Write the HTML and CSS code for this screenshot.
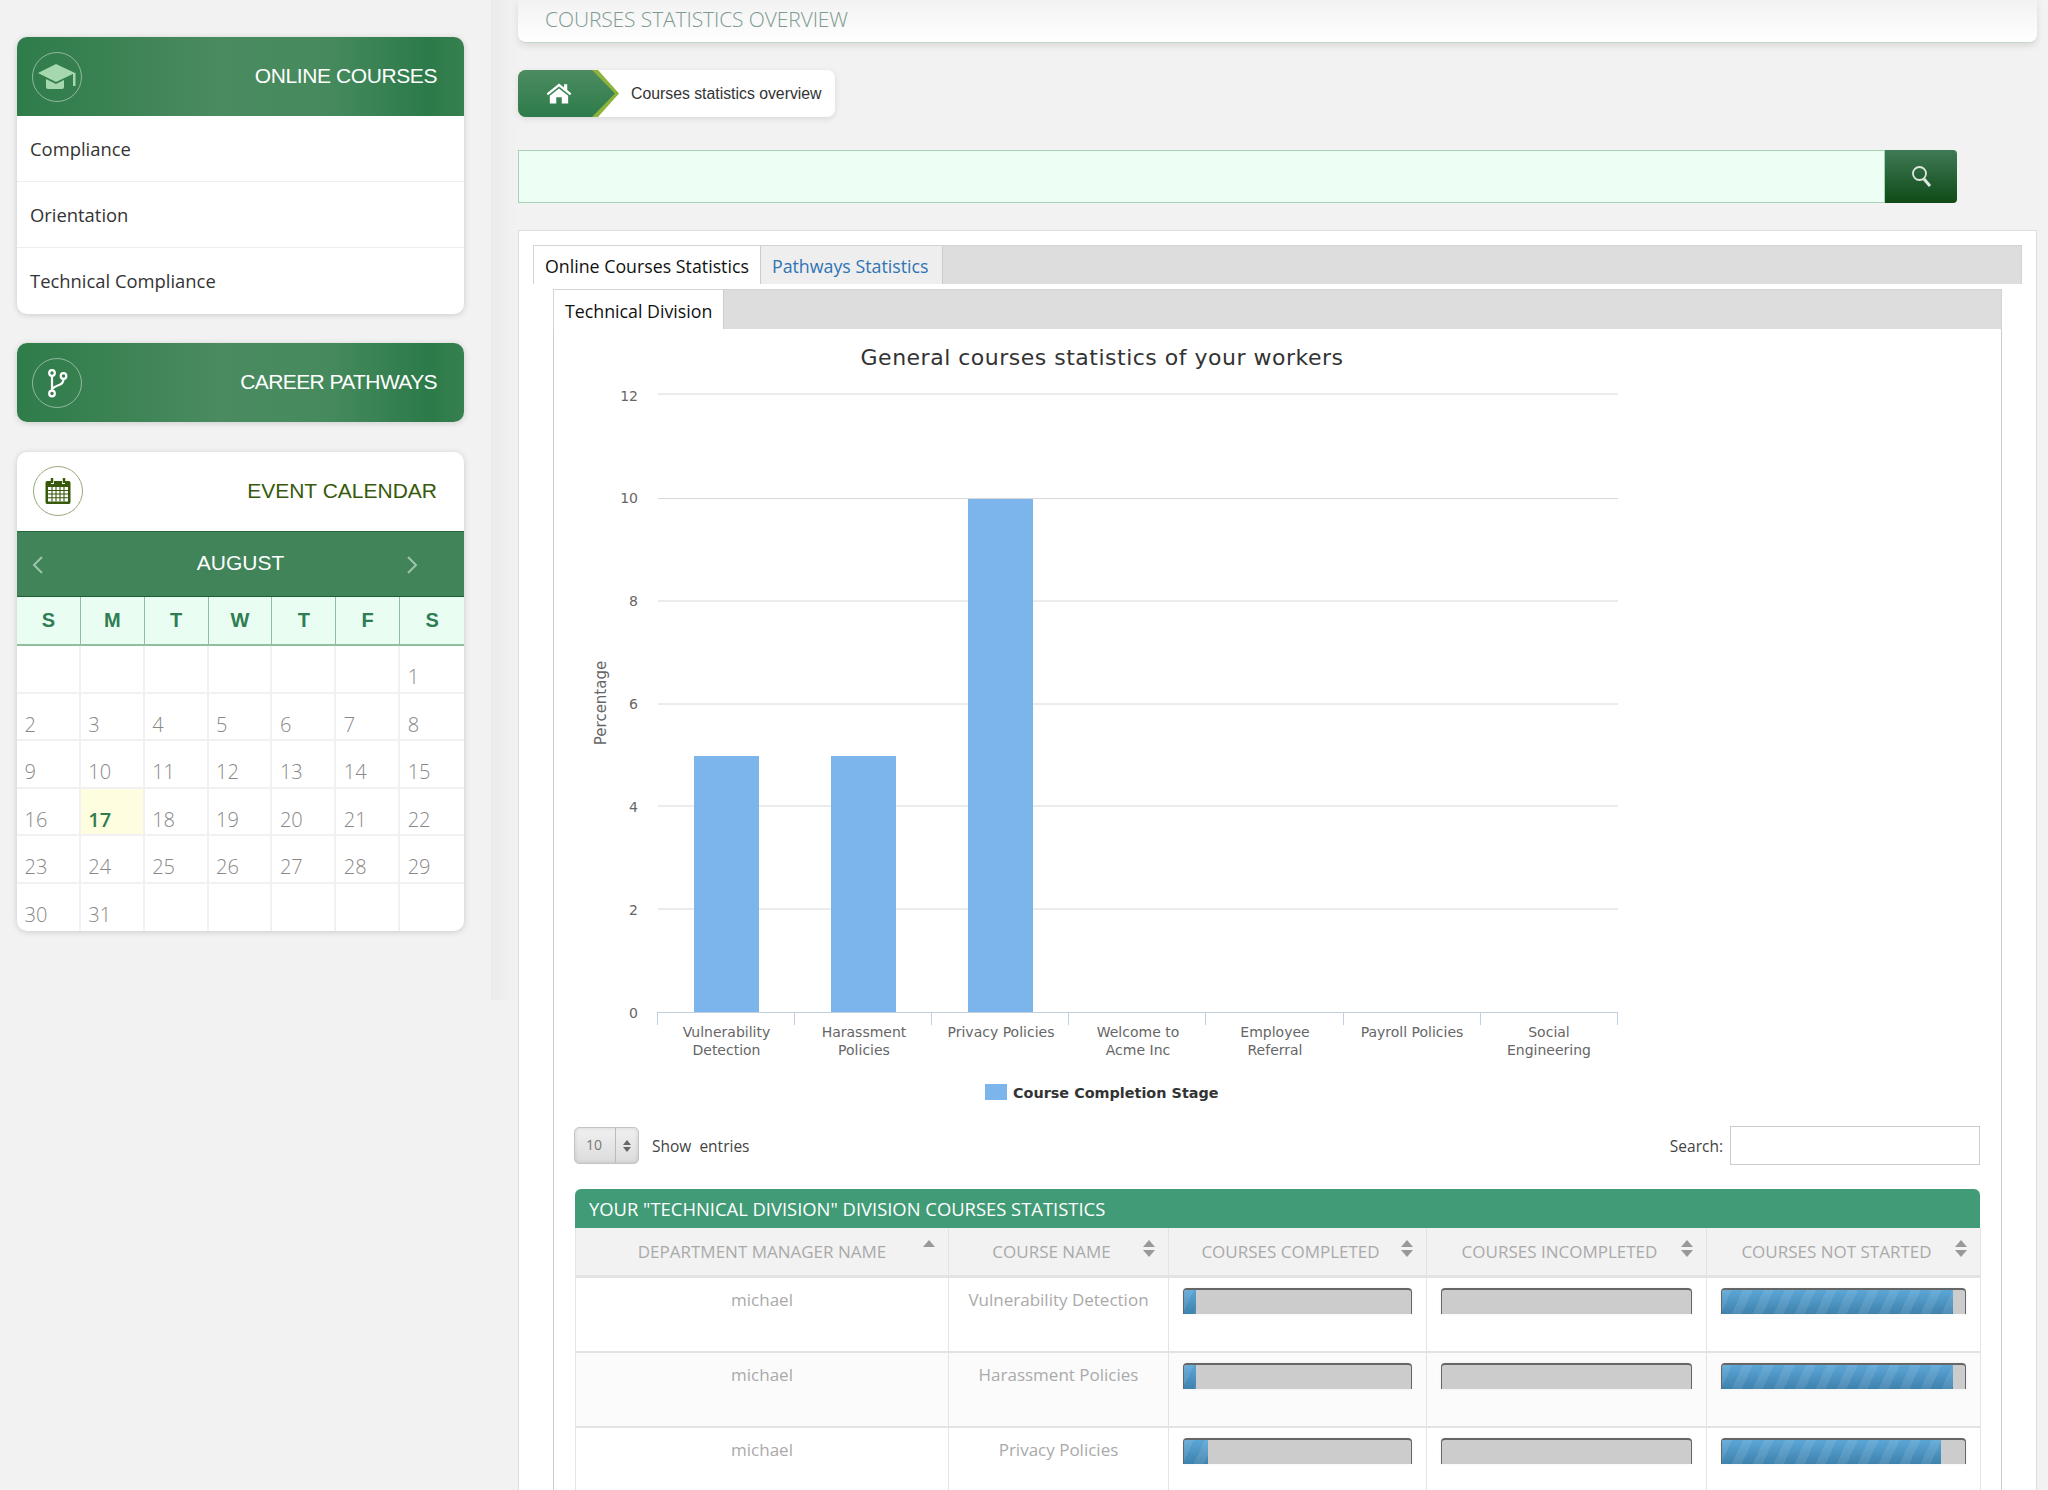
FILE: index.html
```html
<!DOCTYPE html>
<html lang="en">
<head>
    <meta charset="UTF-8">
    <title>Courses statistics overview</title>
    <link rel="stylesheet" href="styles.css">
</head>
<body>
<div class="page">
    <aside class="sidebar">
        <div class="side-card">
            <div class="side-head">
                <span class="head-icon">
                    <svg width="40" height="30" viewBox="0 0 40 30"><path d="M19 2 L38 11 L19 20 L1 11Z M9 17 L19 22 L27 18 V25 Q27 27 25 27 H11 Q9 27 9 25Z M36 11 H38.500 V24 H36Z" fill="#a6d8ae"/></svg>
                </span>
                <span class="head-title">ONLINE COURSES</span>
            </div>
            <ul class="side-list">
                <li>Compliance</li>
                <li>Orientation</li>
                <li>Technical Compliance</li>
            </ul>
        </div>

        <div class="side-card career">
            <div class="side-head">
                <span class="head-icon">
                    <svg width="24" height="30" viewBox="0 0 24 30" fill="none" stroke="#fff" stroke-width="2.200"><circle cx="7" cy="5" r="2.800"/><circle cx="7" cy="25.500" r="2.800"/><circle cx="18.500" cy="8" r="2.800"/><path d="M7 8 V22.500 M18.500 11 Q18.500 15.500 14 17 Q8 19 7 22"/></svg>
                </span>
                <span class="head-title">CAREER PATHWAYS</span>
            </div>
        </div>

        <div class="side-card">
            <div class="cal-head">
                <span class="head-icon cal-icon">
                    <svg width="26" height="28" viewBox="0 0 26 28"><path d="M2 4 H6 V7 H9 V4 H17 V7 H20 V4 H24 Q25.500 4 25.500 6 V25 Q25.500 27 24 27 H2 Q.5 27 .5 25 V6 Q.5 4 2 4Z" fill="#37590b"/><path d="M7 1 V6 M19 1 V6" stroke="#37590b" stroke-width="2.500" fill="none"/><path d="M3 10 H23 V24.500 H3Z" fill="#fff"/><path d="M3 13.500 H23 M3 17 H23 M3 20.800 H23 M7 10 V24.500 M11 10 V24.500 M15 10 V24.500 M19 10 V24.500" stroke="#37590b" stroke-width="1.100" fill="none"/></svg>
                </span>
                <span class="cal-title">EVENT CALENDAR</span>
            </div>
            <div class="cal-month">
                <svg class="prev" width="12" height="18" viewBox="0 0 12 18" fill="none" stroke="#9cc5ab" stroke-width="2"><path d="M10 1 L2 9 L10 17"/></svg>
                <span>AUGUST</span>
                <svg class="next" width="12" height="18" viewBox="0 0 12 18" fill="none" stroke="#9cc5ab" stroke-width="2"><path d="M2 1 L10 9 L2 17"/></svg>
            </div>
            <div class="cal-week">
                <span>S</span><span>M</span><span>T</span><span>W</span><span>T</span><span>F</span><span>S</span>
            </div>
            <div class="cal-days">
                <span></span><span></span><span></span><span></span><span></span><span></span><span>1</span>
                <span>2</span><span>3</span><span>4</span><span>5</span><span>6</span><span>7</span><span>8</span>
                <span>9</span><span>10</span><span>11</span><span>12</span><span>13</span><span>14</span><span>15</span>
                <span>16</span><span class="today">17</span><span>18</span><span>19</span><span>20</span><span>21</span><span>22</span>
                <span>23</span><span>24</span><span>25</span><span>26</span><span>27</span><span>28</span><span>29</span>
                <span>30</span><span>31</span><span></span><span></span><span></span><span></span><span></span>
            </div>
        </div>
    </aside>

    <main class="content">
        <div class="top-bar">COURSES STATISTICS OVERVIEW</div>

        <div class="crumbs">
            <span class="crumb-home">
                <svg width="28" height="22" viewBox="0 0 28 24"><path d="M14 1.500 L0.500 12.500 L2 14.500 L14 4.800 L26 14.500 L27.500 12.500 L23 8.800 V2.500 H19.500 V6 Z" fill="#fff"/><path d="M14 7 L4 15 V23.500 H11 V16.500 H17 V23.500 H24 V15 Z" fill="#fff"/></svg>
            </span>
            <span class="crumb-text">Courses statistics overview</span>
        </div>

        <div class="search-row">
            <div class="search-box"></div>
            <div class="search-btn">
                <svg width="21" height="23" viewBox="0 0 21 23" fill="none" stroke="#dfe8df"><circle cx="8.500" cy="8.500" r="6.500" stroke-width="1.800"/><path d="M13 14 L19 21" stroke-width="3"/></svg>
            </div>
        </div>

        <section class="panel">
            <div class="tabs">
                <span class="tab active">Online Courses Statistics</span>
                <span class="tab link">Pathways Statistics</span>
            </div>
            <div class="inner">
                <div class="tabs inner-tabs">
                    <span class="tab active">Technical Division</span>
                </div>

                <svg class="chart" width="1447" height="785" viewBox="554 329 1447 785">
                    <text class="chart-title" x="1102" y="365" text-anchor="middle">General courses statistics of your workers</text>
                    <g class="grid">
                        <path d="M658 394 H1618"/>
                        <path d="M658 498.500 H1618"/>
                        <path d="M658 601 H1618"/>
                        <path d="M658 704 H1618"/>
                        <path d="M658 806 H1618"/>
                        <path d="M658 909 H1618"/>
                    </g>
                    <g class="y-labels">
                        <text x="638" y="401">12</text>
                        <text x="638" y="503">10</text>
                        <text x="638" y="606">8</text>
                        <text x="638" y="709">6</text>
                        <text x="638" y="812">4</text>
                        <text x="638" y="915">2</text>
                        <text x="638" y="1018">0</text>
                    </g>
                    <text class="y-title" transform="translate(606 703) rotate(-90)" text-anchor="middle">Percentage</text>
                    <g class="bars">
                        <rect x="694" y="756" width="65" height="256"/>
                        <rect x="831" y="756" width="65" height="256"/>
                        <rect x="968" y="499" width="65" height="513"/>
                    </g>
                    <path class="axis" d="M657 1012.500 H1618 M657.500 1012 V1025 M794.500 1012 V1025 M931.500 1012 V1025 M1068.500 1012 V1025 M1205.500 1012 V1025 M1343.500 1012 V1025 M1480.500 1012 V1025 M1617.500 1012 V1025"/>
                    <g class="x-labels" text-anchor="middle">
                        <text x="726.500" y="1037">Vulnerability</text>
                        <text x="726.500" y="1055">Detection</text>
                        <text x="864" y="1037">Harassment</text>
                        <text x="864" y="1055">Policies</text>
                        <text x="1001" y="1037">Privacy Policies</text>
                        <text x="1138" y="1037">Welcome to</text>
                        <text x="1138" y="1055">Acme Inc</text>
                        <text x="1275" y="1037">Employee</text>
                        <text x="1275" y="1055">Referral</text>
                        <text x="1412" y="1037">Payroll Policies</text>
                        <text x="1549" y="1037">Social</text>
                        <text x="1549" y="1055">Engineering</text>
                    </g>
                    <rect x="985" y="1084" width="22" height="16" fill="#7cb5ec"/>
                    <text class="legend" x="1013" y="1098">Course Completion Stage</text>
                </svg>

                <div class="table-tools">
                    <div class="length">
                        <span class="select"><span class="select-value">10</span><span class="select-arrows"></span></span>
                        <span>Show&nbsp; entries</span>
                    </div>
                    <div class="filter">
                        <span>Search:</span>
                        <span class="filter-input"></span>
                    </div>
                </div>

                <div class="table-caption">YOUR "TECHNICAL DIVISION" DIVISION COURSES STATISTICS</div>
                <table class="stats">
                    <thead>
                        <tr>
                            <th class="c-name sort-up">DEPARTMENT MANAGER NAME</th>
                            <th class="c-course">COURSE NAME</th>
                            <th class="c-done">COURSES COMPLETED</th>
                            <th class="c-inc">COURSES INCOMPLETED</th>
                            <th class="c-not">COURSES NOT STARTED</th>
                        </tr>
                    </thead>
                    <tbody>
                        <tr>
                            <td>michael</td>
                            <td>Vulnerability Detection</td>
                            <td><div class="bar"><div class="fill" style="width: 12px"></div></div></td>
                            <td><div class="bar"></div></td>
                            <td><div class="bar"><div class="fill" style="width: 231px"></div></div></td>
                        </tr>
                        <tr class="alt">
                            <td>michael</td>
                            <td>Harassment Policies</td>
                            <td><div class="bar"><div class="fill" style="width: 12px"></div></div></td>
                            <td><div class="bar"></div></td>
                            <td><div class="bar"><div class="fill" style="width: 231px"></div></div></td>
                        </tr>
                        <tr>
                            <td>michael</td>
                            <td>Privacy Policies</td>
                            <td><div class="bar"><div class="fill" style="width: 24px"></div></div></td>
                            <td><div class="bar"></div></td>
                            <td><div class="bar"><div class="fill" style="width: 219px"></div></div></td>
                        </tr>
                    </tbody>
                </table>
            </div>
        </section>
    </main>
</div>
</body>
</html>
```

FILE: styles.css
```css
html, body {
    margin: 0;
    height: 1490px;
    overflow: hidden;
}
body {
    background-color: #f2f2f2;
    font-family: "Open Sans", "Liberation Sans", sans-serif;
    color: #333;
}
.page {
    display: flex;
    align-items: flex-start;
}

/* sidebar */
.sidebar {
    box-sizing: border-box;
    width: 518px;
    height: 1000px;
    flex: none;
    padding: 37px 54px 0 17px;
    background: linear-gradient(to right, #f2f2f2 491px, #ebebeb 491px, #f2f2f2 518px);
}
.side-card {
    background-color: #fff;
    border-radius: 10px;
    box-shadow: 0 1px 6px rgba(0, 0, 0, 0.16);
    margin-bottom: 29px;
    overflow: hidden;
}
.side-card.career {
    margin-bottom: 30px;
}
.side-head {
    height: 79px;
    display: flex;
    align-items: center;
    justify-content: space-between;
    padding: 0 27px 0 15px;
    background: linear-gradient(to right, #2f7c4b 0%, #37804f 15%, #4a8b60 45%, #458a5d 70%, #2c7a49 92%, #37804f 100%);
}
.head-icon {
    box-sizing: border-box;
    width: 50px;
    height: 50px;
    border: 1px solid rgba(255, 255, 255, 0.45);
    border-radius: 50%;
    display: flex;
    align-items: center;
    justify-content: center;
}
.head-title, .cal-title {
    margin-top: -2px;
    font-family: "Liberation Sans", sans-serif;
    font-size: 21px;
    letter-spacing: -0.4px;
    color: #fff;
}
.career .head-title {
    letter-spacing: -0.6px;
}
.side-list {
    list-style: none;
    margin: 0;
    padding: 0;
}
.side-list li {
    height: 66px;
    box-sizing: border-box;
    line-height: 66px;
    padding-left: 13px;
    font-size: 18.400px;
    color: #333;
    border-bottom: 1px solid #eee;
}
.side-list li:last-child {
    border-bottom: 0;
}

/* calendar */
.cal-head {
    box-sizing: border-box;
    height: 79px;
    display: flex;
    align-items: center;
    justify-content: space-between;
    padding: 0 27px 2px 16px;
}
.cal-icon {
    border-color: #9aa97c;
}
.cal-title {
    margin-top: 0;
    color: #37590b;
    letter-spacing: 0;
}
.cal-month {
    box-sizing: border-box;
    height: 66px;
    display: grid;
    grid-template-columns: 1fr auto 1fr;
    align-items: center;
    padding: 2px 15px 0 15px;
    background-color: #41845a;
    border-top: 1px solid #256a3f;
    border-bottom: 1px solid #1f5f38;
    color: #fff;
    font-family: "Liberation Sans", sans-serif;
    font-size: 21px;
}
.cal-month span {
    margin-top: -4px;
}
.cal-month .next {
    justify-self: end;
    margin-right: 31px;
}
.cal-week, .cal-days {
    display: grid;
    grid-template-columns: repeat(7, 1fr);
}
.cal-week span {
    box-sizing: border-box;
    height: 49px;
    line-height: 47px;
    text-align: center;
    font-family: "Liberation Sans", sans-serif;
    font-weight: bold;
    font-size: 20px;
    color: #2f7d50;
    background-color: #eafdf3;
    border-right: 1px solid #8fbf9f;
    border-bottom: 2px solid #8fbf9f;
}
.cal-week span:last-child {
    border-right: 0;
}
.cal-days span {
    box-sizing: border-box;
    height: 47.500px;
    padding: 0 7px 0 7.500px;
    line-height: 61px;
    overflow: hidden;
    font-size: 20px;
    font-weight: 300;
    color: #888;
    border-right: 2px solid #f1f1f1;
    border-bottom: 2px solid #f1f1f1;
}
.cal-days span:nth-child(7n) {
    border-right: 0;
}
.cal-days span:nth-last-child(-n+7) {
    border-bottom: 0;
}
.cal-days .today {
    background-color: #fffde0;
    color: #2f7d50;
    font-weight: 600;
}

/* main column */
.content {
    width: 1519px;
    flex: none;
}
.top-bar {
    box-sizing: border-box;
    height: 43px;
    padding: 5px 0 0 27px;
    font-size: 21px;
    letter-spacing: -0.1px;
    font-weight: 300;
    color: #7f9a90;
    background: linear-gradient(to bottom, #f2f2f2, #fff);
    border-bottom: 1px solid #c4d8c8;
    border-radius: 0 0 8px 8px;
    box-shadow: 0 3px 7px rgba(0, 0, 0, 0.1);
}
.crumbs {
    display: flex;
    align-items: center;
    width: 317px;
    height: 47px;
    margin-top: 27px;
    background-color: #fff;
    border-radius: 8px;
    box-shadow: 0 2px 6px rgba(0, 0, 0, 0.1);
}
.crumb-home {
    position: relative;
    width: 101px;
    height: 47px;
    flex: none;
    display: flex;
    align-items: center;
    padding-left: 27px;
    box-sizing: border-box;
    background-color: #8db33a;
    border-radius: 8px 0 0 8px;
    clip-path: polygon(0 0, 80px 0, 101px 23.500px, 80px 47px, 0 47px);
}
.crumb-home::before {
    content: "";
    position: absolute;
    top: 0;
    left: 0;
    width: 97px;
    height: 47px;
    border-radius: 8px 0 0 8px;
    background: linear-gradient(to bottom, #4b8c60, #2e7b4a);
    clip-path: polygon(0 0, 74px 0, 97px 23.500px, 74px 47px, 0 47px);
}
.crumb-home svg {
    position: relative;
    margin-top: -2px;
}
.crumb-text {
    margin-left: 12px;
    white-space: nowrap;
    font-family: "Liberation Sans", sans-serif;
    font-size: 15.800px;
    color: #333;
}
.search-row {
    display: flex;
    width: 1439px;
    height: 53px;
    margin-top: 33px;
}
.search-box {
    flex: 1;
    background-color: #edfff5;
    border: 1px solid #a8d2b6;
}
.search-btn {
    width: 72px;
    display: flex;
    align-items: center;
    justify-content: center;
    background: linear-gradient(to bottom, #3f7a56, #0f4a17);
    border-radius: 0 4px 4px 0;
}
.panel {
    box-sizing: border-box;
    height: 1400px;
    margin-top: 27px;
    padding: 14px;
    background-color: #fff;
    border: 1px solid #ddd;
}
.tabs {
    display: flex;
    height: 39px;
    box-sizing: border-box;
    background-color: #ddd;
    border: 1px solid #d4d4d4;
    border-bottom: 0;
}
.tab {
    box-sizing: border-box;
    height: 38px;
    padding: 0 11px;
    line-height: 41px;
    font-size: 17.800px;
    font-weight: 500;
    color: #111;
    border-right: 1px solid #ccc;
}
.tab.active {
    background-color: #fff;
}
.tab.link {
    padding-right: 13px;
    background-color: #eee;
    color: #2f74b5;
}
.inner {
    box-sizing: border-box;
    height: 1400px;
    margin: 5px 20px 0 20px;
    border: 1px solid #ccc;
    border-top: 0;
    padding: 0;
}
.inner-tabs {
    height: 40px;
    margin: 0 -1px;
}
.inner-tabs .tab {
    height: 39px;
    line-height: 42px;
}

/* chart */
.chart {
    display: block;
    font-family: "DejaVu Sans", sans-serif;
}
.chart-title {
    font-size: 22px;
    letter-spacing: 0.5px;
    fill: #333;
}
.grid path {
    stroke: #d8d8d8;
    fill: none;
}
.y-labels text {
    text-anchor: end;
    font-size: 14px;
    fill: #666;
}
.y-title {
    font-size: 15px;
    fill: #666;
}
.bars rect {
    fill: #7cb5ec;
}
.axis {
    stroke: #c0d0e0;
    fill: none;
}
.x-labels text {
    font-size: 14px;
    fill: #666;
}
.legend {
    font-size: 14.400px;
    font-weight: bold;
    fill: #333;
}

/* table */
.table-tools {
    display: flex;
    align-items: center;
    justify-content: space-between;
    height: 39px;
    margin: 12px 21px 0 20px;
    font-size: 15.500px;
    color: #444;
}
.length, .filter {
    display: flex;
    align-items: center;
    gap: 13px;
}
.filter {
    gap: 7px;
}
.select {
    box-sizing: border-box;
    display: flex;
    width: 65px;
    height: 37px;
    background: linear-gradient(to bottom, #f0f0f0, #dcdcdc);
    border: 1px solid #c4c4c4;
    border-radius: 5px;
    box-shadow: inset 0 0 4px rgba(0, 0, 0, 0.12);
}
.select-value {
    flex: 1;
    padding-left: 11px;
    line-height: 34px;
    font-size: 14px;
    color: #777;
}
.select-arrows {
    position: relative;
    width: 22px;
    border-left: 1px solid #bbb;
}
.select-arrows::before, .select-arrows::after {
    content: "";
    position: absolute;
    left: 7px;
    border-left: 4px solid transparent;
    border-right: 4px solid transparent;
}
.select-arrows::before {
    top: 12px;
    border-bottom: 5px solid #666;
}
.select-arrows::after {
    top: 19px;
    border-top: 5px solid #666;
}
.filter-input {
    box-sizing: border-box;
    width: 250px;
    height: 39px;
    background-color: #fff;
    border: 1px solid #ccc;
}
.table-caption {
    height: 39px;
    margin: 24px 21px 0 21px;
    padding-left: 14px;
    line-height: 39px;
    font-size: 18.400px;
    color: #fff;
    background-color: #419b76;
    border-radius: 6px 6px 0 0;
}
.stats {
    box-sizing: border-box;
    width: 1405px;
    margin: 0 21px;
    table-layout: fixed;
    border-collapse: collapse;
}
.stats th {
    position: relative;
    box-sizing: border-box;
    height: 48px;
    padding: 0 14px 0 0;
    font-size: 17px;
    font-weight: 400;
    text-align: center;
    color: #aaa;
    background-color: #f2f2f2;
    border: 1px solid #e3e3e3;
    border-top: 0;
    border-bottom: 3px solid #e3e3e3;
}
.stats th.c-name {
    padding: 0;
}
.stats th::before, .stats th::after {
    content: "";
    position: absolute;
    right: 13px;
    border-left: 6px solid transparent;
    border-right: 6px solid transparent;
}
.stats th::before {
    top: 12px;
    border-bottom: 7px solid #999;
}
.stats th::after {
    top: 22px;
    border-top: 7px solid #999;
}
.stats th.sort-up::after {
    display: none;
}
.c-name { width: 373px; }
.c-course { width: 220px; }
.c-done { width: 258px; }
.c-inc { width: 280px; }
.c-not { width: 274px; }
.stats td {
    box-sizing: border-box;
    height: 75.500px;
    padding: 10px 14px 0 14px;
    vertical-align: top;
    text-align: center;
    font-size: 17px;
    color: #aaa;
    background-color: #fff;
    border: 1px solid #e3e3e3;
    border-bottom: 2px solid #e3e3e3;
}
.stats .alt td {
    background-color: #fbfbfb;
}
.bar {
    box-sizing: border-box;
    height: 26px;
    background-color: #ccc;
    border: 1px solid #666;
    border-top-width: 2px;
    border-bottom: 0;
    border-radius: 4px 4px 0 0;
    box-shadow: 0 0 3px rgba(0, 0, 0, 0.06);
    overflow: hidden;
}
.fill {
    height: 100%;
    background:
        repeating-linear-gradient(115deg, rgba(255, 255, 255, 0.09) 0 9px, transparent 9px 19px),
        linear-gradient(to bottom, #5ba6d6, #3f82ae);
}
```
